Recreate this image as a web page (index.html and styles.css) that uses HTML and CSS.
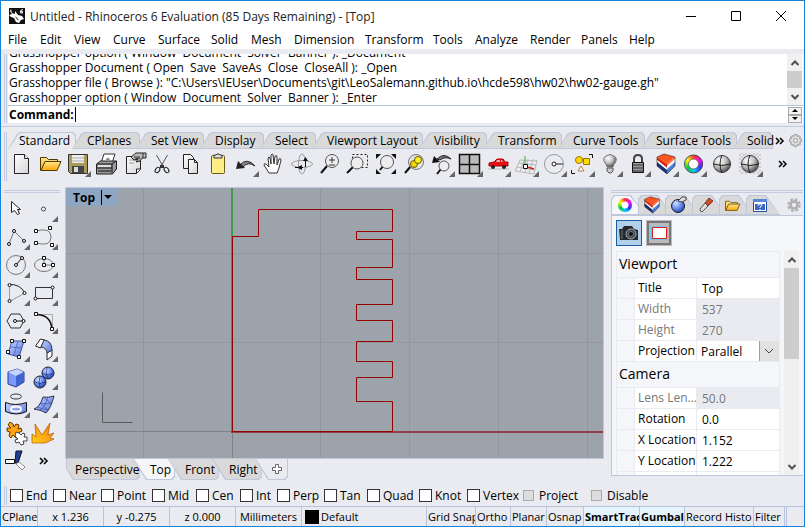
FILE: index.html
```html
<!DOCTYPE html>
<html lang="en">
<head>
<meta charset="utf-8">
<title>Untitled - Rhinoceros 6 Evaluation (85 Days Remaining) - [Top]</title>
<link rel="stylesheet" href="styles.css">
</head>
<body>
<svg class="defs" width="0" height="0" aria-hidden="true">
  <defs>
    <linearGradient id="paper" x1="0" y1="0" x2="1" y2="1"><stop offset="0" stop-color="#fff"/><stop offset="1" stop-color="#d4d4d4"/></linearGradient>
    <linearGradient id="gold" x1="0" y1="0" x2="0" y2="1"><stop offset="0" stop-color="#ffe68a"/><stop offset="1" stop-color="#ffa80c"/></linearGradient>
    <linearGradient id="blue" x1="0" y1="0" x2="1" y2="1"><stop offset="0" stop-color="#c4d2ff"/><stop offset="1" stop-color="#5a78e2"/></linearGradient>
    <linearGradient id="fire" x1="0" y1="1" x2="1" y2="0"><stop offset="0" stop-color="#ffd21c"/><stop offset="1" stop-color="#f5740a"/></linearGradient>
    <radialGradient id="ball" cx=".35" cy=".3" r=".75"><stop offset="0" stop-color="#fff"/><stop offset=".5" stop-color="#c4c4c4"/><stop offset="1" stop-color="#444"/></radialGradient>
    <radialGradient id="blueball" cx=".35" cy=".3" r=".75"><stop offset="0" stop-color="#d5e2ff"/><stop offset=".5" stop-color="#6f90f0"/><stop offset="1" stop-color="#2443a8"/></radialGradient>
    <pattern id="dots" width="4" height="4" patternUnits="userSpaceOnUse"><path d="M0 0h2v2H0zM2 2h2v2H2z" fill="#ccc"/></pattern>
    <symbol id="more" viewBox="0 0 28 28"><path d="M28 21v6h-6z" fill="#666"/></symbol>
    <symbol id="layers" viewBox="0 0 28 28"><path d="M6 7l10 7v4L6 10z" fill="#d42a14"/><path d="M6 10l10 8v2L6 12z" fill="#fff"/><path d="M6 12l10 8v4L6 16z" fill="#182f7c"/><path d="M16 14l8-7v2l-8 7z" fill="#ff7a4c"/><path d="M16 16l8-7v3l-8 7z" fill="#fff"/><path d="M16 19l8-7v4l-8 8z" fill="#4680dc"/><path d="M6 7l7-3 11 3-8 7z" fill="#ff5420"/><path d="M6 7l7-3 11 3v9l-8 8-10-8z" fill="none" stroke="#3b2020" stroke-width=".6"/></symbol>
    <symbol id="folder" viewBox="0 0 28 28"><path d="M5.500 20.500v-13h6l2 2h9v3" fill="url(#gold)" stroke="#4c3a00"/><path d="M6 20.500l4-9h16l-4 9z" fill="url(#gold)" stroke="#4c3a00"/></symbol>
    <symbol id="gear" viewBox="0 0 16 16"><circle cx="8" cy="8" r="6.500" fill="none" stroke="currentColor" stroke-width="2.500" stroke-dasharray="3.100 2"/><circle cx="8" cy="8" r="4" fill="none" stroke="currentColor" stroke-width="3"/></symbol>
    <symbol id="sphere" viewBox="0 0 28 28"><circle cx="15" cy="14" r="8.500" fill="url(#ball)" stroke="#444"/><path d="M6 14q9 3 18 0M15 5q-4 9 0 18" fill="none" stroke="#222"/></symbol>
  </defs>
</svg>

<div class="window">
  <header class="titlebar">
    <svg class="logo" width="16" height="16" viewBox="0 0 16 16"><path fill="#111" d="M0 0h16v16H0z"/><path fill="#fff" d="M2 1l1 4 3 1V3l3 4 4 1 2 3-3 1-2 3-3-1-2-4-3-1-2-2 3-1-2-3z"/><path d="M6 8l3 2 1 3-3-2z" fill="#888"/><path d="M14 1.500q-3 0-2.500 3.500h2V3.500h-2" fill="none" stroke="#fff"/></svg>
    <h1>Untitled - Rhinoceros 6 Evaluation (85 Days Remaining) - [Top]</h1>
    <div class="window-buttons">
      <button aria-label="Minimize"><svg width="12" height="12"><path d="M1 6.500h10"/></svg></button>
      <button aria-label="Maximize"><svg width="12" height="12"><path d="M1.500 1.500h9v9h-9z"/></svg></button>
      <button aria-label="Close"><svg width="12" height="12"><path d="M1 1l10 10M11 1L1 11"/></svg></button>
    </div>
  </header>

  <nav class="menubar">
    <button>File</button><button>Edit</button><button>View</button><button>Curve</button><button>Surface</button><button>Solid</button><button>Mesh</button><button>Dimension</button><button>Transform</button><button>Tools</button><button>Analyze</button><button>Render</button><button>Panels</button><button>Help</button>
  </nav>

  <section class="command">
    <div class="grip"></div>
    <div class="command-body">
      <div class="history">
        <div class="history-text">
          <p>Grasshopper option ( Window&nbsp; Document&nbsp; Solver&nbsp; Banner ): _Document</p>
          <p>Grasshopper Document ( Open&nbsp; Save&nbsp; SaveAs&nbsp; Close&nbsp; CloseAll ): _Open</p>
          <p>Grasshopper file ( Browse ): "C:\Users\IEUser\Documents\git\LeoSalemann.github.io\hcde598\hw02\hw02-gauge.gh"</p>
          <p>Grasshopper option ( Window&nbsp; Document&nbsp; Solver&nbsp; Banner ): _Enter</p>
        </div>
        <div class="scrollbar">
          <button aria-label="Scroll up"><svg width="10" height="8"><path d="M1.500 6L5 2.500 8.500 6"/></svg></button>
          <div class="thumb"></div>
          <button aria-label="Scroll down"><svg width="10" height="8"><path d="M1.500 2L5 5.500 8.500 2"/></svg></button>
        </div>
      </div>
      <div class="prompt">
        <label for="cmd">Command:</label><span class="caret"></span>
        <input id="cmd" type="text">
        <div class="spin">
          <button aria-label="Previous"><svg width="6" height="3"><path d="M0 3l3-3 3 3z"/></svg></button>
          <button aria-label="Next"><svg width="6" height="3"><path d="M0 0l3 3 3-3z"/></svg></button>
        </div>
      </div>
    </div>
  </section>

  <section class="toolbar">
    <div class="grip"></div>
    <div class="toolbar-body">
      <div class="tabs">
        <button class="tab active"><span>Standard</span></button><button class="tab"><span>CPlanes</span></button><button class="tab"><span>Set View</span></button><button class="tab"><span>Display</span></button><button class="tab"><span>Select</span></button><button class="tab"><span>Viewport Layout</span></button><button class="tab"><span>Visibility</span></button><button class="tab"><span>Transform</span></button><button class="tab"><span>Curve Tools</span></button><button class="tab"><span>Surface Tools</span></button><button class="tab last"><span>Solid</span></button>
        <button class="chev" aria-label="More tabs"><svg width="10" height="8"><path d="M1 1l3 3-3 3M5 1l3 3-3 3"/></svg></button>
        <button class="cog" aria-label="Toolbar options"><svg width="15" height="15" viewBox="0 0 16 16"><path d="M8 1.500l1.500.5.500 1.500 2-.5 1 1-.5 2 1.500.5.500 1.500-.5 1.500-1.500.5.500 2-1 1-2-.5-.5 1.500-1.500.5-1.500-.5-.5-1.500-2 .5-1-1 .5-2L2 9.500 1.500 8 2 6.500 3.500 6 3 4l1-1 2 .5L6.500 2z" fill="#ddd" stroke="#888"/><circle cx="8" cy="8" r="2" fill="#fff" stroke="#888"/></svg></button>
      </div>
      <div class="tools">
        <button aria-label="New"><svg viewBox="0 0 28 28"><path d="M7.500 4.500h10l4 4v15h-14z" fill="url(#paper)" stroke="#222"/><path d="M17.500 4.500v4h4" fill="#fff" stroke="#222"/></svg></button>
        <button aria-label="Open"><svg viewBox="0 0 28 28"><use href="#folder"/></svg></button>
        <button aria-label="Save"><svg viewBox="0 0 28 28"><path d="M5.500 4.500h19v19h-17l-2-2z" fill="#a89c5c" stroke="#333"/><path d="M9 5h12v8H9z" fill="#eee"/><path d="M9 8h12M9 11h12" stroke="#aaa"/><path d="M9 16h12v7H9z" fill="#444"/><path d="M11 17h4v5h-4z" fill="#ddd"/><use href="#more"/></svg></button>
        <button aria-label="Print"><svg viewBox="0 0 28 28"><path d="M10 13l3-9h11l-3 9z" fill="#fff" stroke="#333"/><path d="M15 9q3-3 4 1h-4z" fill="#888"/><path d="M5.500 14l4-3h16v8l-4 5h-16z" fill="#999" stroke="#222"/><path d="M6 14h15v9M21 14l4-3M6 18h15M7 21h13" stroke="#111" fill="none"/><path d="M7 15h13v2H7z" fill="#ddd"/></svg></button>
        <button aria-label="Properties"><svg viewBox="0 0 28 28"><path d="M7.500 6.500h14v13l-4 4h-10z" fill="url(#paper)" stroke="#222"/><path d="M21.500 19h-4v4" fill="#fff" stroke="#222"/><path d="M10 10h7M10 13h5" stroke="#999"/><path d="M12 7l5-4 6 0h4v5h-4l-2 3-4 1 2-3-4 1z" fill="#bbb" stroke="#222"/><path d="M15 7h6M16 9l5-1M24 3v5" stroke="#333"/></svg></button>
        <button aria-label="Cut"><svg viewBox="0 0 28 28"><path d="M9.500 5l7.500 13M20.500 5L13 18" stroke="#555"/><ellipse cx="10.500" cy="20" rx="2" ry="3" transform="rotate(35 10.500 20)" fill="none" stroke="#222"/><ellipse cx="19.500" cy="20" rx="2" ry="3" transform="rotate(-35 19.500 20)" fill="none" stroke="#222"/><path d="M13 15h4v3h-4z" fill="#333"/></svg></button>
        <button aria-label="Copy"><svg viewBox="0 0 28 28"><path d="M8.500 4.500h7l3 3v11h-10z" fill="url(#paper)" stroke="#222"/><path d="M13.500 9.500h6l3 3v11h-9z" fill="url(#paper)" stroke="#222"/><path d="M19.500 9.500v3h3" fill="none" stroke="#222"/></svg></button>
        <button aria-label="Paste"><svg viewBox="0 0 28 28"><rect x="8.500" y="5.500" width="13" height="18" rx="1" fill="#ffed87" stroke="#6d5a14"/><path d="M11 8V5h2l1-1h2l1 1h2v3z" fill="#ddd" stroke="#333"/></svg></button>
        <button aria-label="Undo"><svg viewBox="0 0 28 28"><path d="M9 15q7-8 15 1-7-5-12 1z" fill="#888" stroke="#222"/><path d="M5 19l2-8 7 7z" fill="#222"/><use href="#more"/></svg></button>
        <button aria-label="Pan"><svg viewBox="0 0 28 28"><path d="M10 23l-5-8q0-2 2-1l3 3-1-9q1-2 2 0l1 6 0-9q2-2 2 0l1 9 1-8q2-1 2 1v8l2-6q2-1 2 1l-2 8-2 5z" fill="#fff" stroke="#333"/></svg></button>
        <button aria-label="Rotate view"><svg viewBox="0 0 28 28"><ellipse cx="15" cy="14" rx="10.500" ry="3.500" fill="none" stroke="#999"/><ellipse cx="15" cy="14" rx="3.500" ry="10" fill="none" stroke="#999"/><path d="M18.500 17V8M8 17.500h8" fill="none" stroke="#111"/><path d="M16 11l2.500-4 2.500 4zM15 15v5l-5-2.500z" fill="#111"/></svg></button>
        <button aria-label="Zoom dynamic"><svg viewBox="0 0 28 28"><path d="M6 23l6-7" stroke="#111" stroke-width="2"/><circle cx="17" cy="11" r="6.500" fill="#eee" stroke="#555"/><path d="M14 10h6M17 7v6M14 15h6" stroke="#333"/></svg></button>
        <button aria-label="Zoom window"><svg viewBox="0 0 28 28"><path d="M9.500 4.500h15v13h-15z" fill="none" stroke="#222" stroke-dasharray="2 2"/><path d="M4 23l6-6" stroke="#111" stroke-width="2"/><circle cx="14" cy="13" r="6" fill="#eee" stroke="#555"/></svg></button>
        <button aria-label="Zoom extents"><svg viewBox="0 0 28 28"><path d="M5 4h5L5 9zM25 4v5l-5-5zM5 24v-5l5 5zM25 24h-5l5-5z" fill="#111"/><path d="M9 20l4-5" stroke="#111" stroke-width="2"/><circle cx="16" cy="12" r="6.500" fill="#eee" stroke="#555"/></svg></button>
        <button aria-label="Zoom selected"><svg viewBox="0 0 28 28"><path d="M6 23l6-7" stroke="#111" stroke-width="2"/><circle cx="17" cy="12" r="7.500" fill="#e4e4e4" stroke="#777"/><circle cx="15" cy="14" r="3.500" fill="#f5d800" stroke="#665800"/><circle cx="19" cy="10" r="3.500" fill="#ffee20" stroke="#665800"/></svg></button>
        <button aria-label="Undo view"><svg viewBox="0 0 28 28"><path d="M10 9q7-7 14 0-6-3-11 1z" fill="#777" stroke="#222"/><path d="M5 13l2-7 6 6z" fill="#111"/><path d="M10 24l4-5" stroke="#111" stroke-width="2"/><circle cx="17" cy="16" r="5" fill="#eee" stroke="#555"/><use href="#more"/></svg></button>
        <button aria-label="Four views"><svg viewBox="0 0 28 28"><path d="M4.500 4.500h20v19h-20z" fill="#bbb" stroke="#111" stroke-width="1.500"/><path d="M14.500 4v20M4 14.500h21" stroke="#111" stroke-width="1.500"/><use href="#more"/></svg></button>
        <button aria-label="Set view"><svg viewBox="0 0 28 28"><path d="M6 13l5-1 3-3h6l2 3h3v4H6z" fill="#e60f13" stroke="#b00"/><path d="M14 10h3v2h-4zM18 10h1l1 2h-2z" fill="#bbb"/><path d="M5 19h21" stroke="#bbb"/><circle cx="10" cy="17" r="2" fill="#222"/><circle cx="21" cy="17" r="2" fill="#222"/><use href="#more"/></svg></button>
        <button aria-label="Set CPlane"><svg viewBox="0 0 28 28"><path d="M9 10l-5 11M13 10l-4 12M17 9l-3 14M22 9l-4 15M26 10l-3 14M9 10l17 1M8 13l17 2M6 17l18 3M4 21l19 3" fill="none" stroke="#b8b8b8"/><path d="M14 16V6" stroke="#3a3"/><path d="M16 17l7 2" stroke="#c22" stroke-width="1.500"/><path d="M12.500 14.500h4v4h-4z" fill="#fff" stroke="#111"/><use href="#more"/></svg></button>
        <button aria-label="Object snap"><svg viewBox="0 0 28 28"><circle cx="15" cy="14" r="9.500" fill="none" stroke="#999"/><path d="M16 14h8" stroke="#222"/><circle cx="15" cy="14" r="2" fill="#fff" stroke="#222"/><use href="#more"/></svg></button>
        <button aria-label="Select"><svg viewBox="0 0 28 28"><path d="M22 4.500h3.500V8M4.500 20v3.500H8" fill="none" stroke="#111"/><circle cx="12" cy="10" r="3.500" fill="#ffdc00" stroke="#a66c00"/><path d="M16.500 8.500h6v6h-6z" fill="#ffdc00" stroke="#a66c00"/><path d="M14 16l3 5h-6z" fill="#fff" stroke="#b37b48"/><use href="#more"/></svg></button>
        <button aria-label="Hide"><svg viewBox="0 0 28 28"><path d="M12 17q0-2-2-4-3-5 1-7 4-3 8 0 4 2 1 7-2 2-2 4z" fill="url(#ball)" stroke="#777"/><path d="M12 18h6v3l-2 2h-2l-2-2z" fill="#ccc" stroke="#555"/><use href="#more"/></svg></button>
        <button aria-label="Lock"><svg viewBox="0 0 28 28"><path d="M11 13V9q0-4 4-4t4 4v4" fill="none" stroke="#444" stroke-width="2"/><path d="M9.500 12.500h11v10h-11z" fill="#999" stroke="#111"/><path d="M10 15h10M10 18h10M10 21h10" stroke="#333"/><use href="#more"/></svg></button>
        <button aria-label="Layers"><svg viewBox="0 0 28 28"><use href="#layers"/><use href="#more"/></svg></button>
        <button aria-label="Properties colour"><span class="wheel"></span><svg viewBox="0 0 28 28"><circle cx="14.500" cy="14" r="9" fill="none" stroke="#444"/><circle cx="14.500" cy="14" r="5" fill="#fff" stroke="#777"/><use href="#more"/></svg></button>
        <button aria-label="Shade"><svg viewBox="0 0 28 28"><use href="#sphere"/></svg></button>
        <button aria-label="Render"><svg viewBox="0 0 28 28"><path d="M4 3h22v21H4z" fill="url(#dots)"/><use href="#sphere"/><use href="#more"/></svg></button>
        <button class="chev" aria-label="More tools"><svg class="small" width="10" height="8"><path d="M1 1l3 3-3 3M5 1l3 3-3 3"/></svg></button>
      </div>
    </div>
  </section>

  <main class="main">
    <aside class="sidebar">
      <div class="hgrip"></div>
      <div class="side-tools">
        <button aria-label="Cancel"><svg viewBox="0 0 28 28"><path d="M9.500 6.500v11l3-2 3 4 2-1-2-4h3z" fill="#fff" stroke="#222"/></svg></button>
        <button aria-label="Point"><svg viewBox="0 0 28 28"><circle cx="13.500" cy="14" r="2" fill="#fff" stroke="#444"/><use href="#more"/></svg></button>
        <button aria-label="Polyline"><svg viewBox="0 0 28 28"><path d="M7 21l5-13 10 10" fill="none" stroke="#777"/><g fill="#fff" stroke="#111"><circle cx="7" cy="21" r="1.500"/><circle cx="12" cy="8" r="1.500"/><circle cx="22" cy="18" r="1.500"/></g><use href="#more"/></svg></button>
        <button aria-label="Curve"><svg viewBox="0 0 28 28"><path d="M6 8q15-4 15 6T6 20" fill="none" stroke="#777"/><path d="M4.500 6.500h3v3h-3zM18.500 3.500h3v3h-3zM4.500 18.500h3v3h-3zM20.500 20.500h3v3h-3z" fill="#fff" stroke="#111"/><use href="#more"/></svg></button>
        <button aria-label="Circle"><svg viewBox="0 0 28 28"><circle cx="14" cy="14" r="9.500" fill="none" stroke="#777"/><path d="M14 14l6-7" stroke="#111"/><g fill="#fff" stroke="#111"><circle cx="14" cy="14" r="1.500"/><circle cx="20" cy="7" r="1.500"/></g><use href="#more"/></svg></button>
        <button aria-label="Ellipse"><svg viewBox="0 0 28 28"><ellipse cx="14" cy="14" rx="9.500" ry="6.500" fill="none" stroke="#777"/><path d="M14 7v7h9" stroke="#777" fill="none"/><path d="M12.500 5.500h3v3h-3zM12.500 12.500h3v3h-3zM21.500 12.500h3v3h-3z" fill="#fff" stroke="#111"/><use href="#more"/></svg></button>
        <button aria-label="Arc"><svg viewBox="0 0 28 28"><path d="M7.500 5.500v17L23 14" fill="none" stroke="#999"/><path d="M7.500 5.500Q18 5 23 14" fill="none" stroke="#222"/><g fill="#fff" stroke="#111"><circle cx="7.500" cy="6" r="1.500"/><circle cx="7.500" cy="22" r="1.500"/><circle cx="22.500" cy="14" r="1.500"/></g><use href="#more"/></svg></button>
        <button aria-label="Rectangle"><svg viewBox="0 0 28 28"><path d="M5.500 8.500h17v11h-17z" fill="none" stroke="#333"/><g fill="#fff" stroke="#111"><circle cx="22.500" cy="8.500" r="1.500"/><circle cx="5.500" cy="19.500" r="1.500"/></g><use href="#more"/></svg></button>
        <button aria-label="Polygon"><svg viewBox="0 0 28 28"><path d="M5 14l4-7h9l4 7-4 7H9z" fill="none" stroke="#333"/><path d="M13 14h8" stroke="#111"/><g fill="#fff" stroke="#111"><circle cx="13" cy="14" r="1.500"/><circle cx="21.500" cy="14" r="1.500"/></g><use href="#more"/></svg></button>
        <button aria-label="Fillet"><svg viewBox="0 0 28 28"><path d="M6 7.500h16.500V22" fill="none" stroke="#aaa"/><path d="M6 7.500q15 0 16 15" fill="none" stroke="#111" stroke-width="1.500"/><path d="M4.500 5.500h3v3h-3zM20.500 20.500h3v3h-3z" fill="#fff" stroke="#111"/><use href="#more"/></svg></button>
        <button aria-label="Surface from points"><svg viewBox="0 0 28 28"><path d="M10 6l12 0-5 16-11-3z" fill="url(#blue)" stroke="#3b509e"/><path d="M16 6l-4 14M8 12l12 1" stroke="#5670c4"/><path d="M8.500 4.500h3v3h-3zM20.500 4.500h3v3h-3zM4.500 15.500h3v3h-3zM15.500 20.500h3v3h-3z" fill="#fff" stroke="#111"/><use href="#more"/></svg></button>
        <button aria-label="Surface"><svg viewBox="0 0 28 28"><path d="M5.500 11l5-7 4 1-4 8zM17 18l5-3v6l-5 4z" fill="#fff" stroke="#222"/><path d="M14 5q8 1 8 10l-5 3q0-5-6-6z" fill="url(#blue)" stroke="#333"/><use href="#more"/></svg></button>
        <button aria-label="Box"><svg viewBox="0 0 28 28"><path d="M6 9l9-3 7 3v10l-8 5-8-3z" fill="#7c99f7" stroke="#223a91"/><path d="M6 9l9-3 7 3-8 4z" fill="#c8d6ff"/><path d="M14 13l8-4v10l-8 5z" fill="#4163cf"/></svg></button>
        <button aria-label="Boolean"><svg viewBox="0 0 28 28"><circle cx="10" cy="19" r="6" fill="url(#blueball)" stroke="#223"/><circle cx="18" cy="10" r="6" fill="url(#blueball)" stroke="#223"/><path d="M12 10q6 4 12 0M17 4q-2 6 1 12M5 19q5 3 10 0M10 14q-2 5 0 10" fill="none" stroke="#18307c" stroke-width=".7"/><use href="#more"/></svg></button>
        <button aria-label="Project"><svg viewBox="0 0 28 28"><ellipse cx="14" cy="5.500" rx="5.500" ry="2.500" fill="none" stroke="#333"/><path d="M3.500 11.500q10 4 21 0v9q-10 5-21 0z" fill="url(#blue)" stroke="#111"/><ellipse cx="14" cy="18" rx="5" ry="2.500" fill="none" stroke="#fff" stroke-width="2"/><use href="#more"/></svg></button>
        <button aria-label="Mesh"><svg viewBox="0 0 28 28"><path d="M4 18q6-2 9-12 5 1 11-1-3 12-8 17-4-3-12-4z" fill="url(#blue)" stroke="#334"/><path d="M10 12q5 2 11 0M7 16q6 2 11 3M18 6q-3 10-8 13M13 6l8 6M10 12l8 7" fill="none" stroke="#3b53a8" stroke-width=".7"/><use href="#more"/></svg></button>
        <button aria-label="Explode"><svg viewBox="0 0 28 28"><path d="M8 3l3 2 1 3 2-3 3 1-1 4 3-1 1 3-4 2 1 4-3 1-3-3-2 3-2-2 1-4-3-1 0-3 4 0-3-3z" fill="#ffa313" stroke="#5d3800"/><path d="M14 13l3 1 2 2 2-2 2 1-1 3 3 0v4l-4 0 1 3-3 1-2-3-3 1-1-3 3-1-3-3z" fill="#fff" stroke="#444"/></svg></button>
        <button aria-label="Join"><svg viewBox="0 0 28 28"><path d="M2 24V15l4 3L5 5l7 11 8-12-2 12 6-2-4 5 4 1-9 4z" fill="url(#fire)" stroke="#b35600" stroke-width=".7"/></svg></button>
        <button aria-label="Trim"><svg viewBox="0 0 28 28"><path d="M14 4h6l-4 12h-3z" fill="#203e94" stroke="#112"/><path d="M3.500 12.500h9v4h-9z" fill="#fff" stroke="#111"/><path d="M14 17l3-2 6 5-3 3z" fill="#fff" stroke="#888"/></svg></button>
        <button class="chev" aria-label="More tools"><svg class="small" width="10" height="8"><path d="M1 1l3 3-3 3M5 1l3 3-3 3"/></svg></button>
      </div>
    </aside>

    <section class="view">
      <div class="viewport">
        <svg class="canvas" width="100%" height="100%">
          <g transform="translate(.5 .5)" fill="none">
            <path d="M77 0v271M254 0v271M343 0v271M432 0v271M521 0v271M0 65h2000M0 154h2000" stroke="#92979d"/>
            <path d="M0 243h166M166 243v40" stroke="#7e8287"/>
            <path d="M36 204v30h30" stroke="#5a5a5a"/>
          </g>
          <path d="M166 0v244" stroke="#409b46" stroke-width="2"/>
          <path d="M165 244h1835" stroke="#984047" stroke-width="2"/>
          <path transform="translate(.5 .5)" d="M166 48h26V21h134v22h-36v8h36v28h-36v12h36v25h-36v16h36v21h-36v20h36v16h-36v24h36v30H166z" fill="none" stroke="#970000"/>
        </svg>
        <button class="view-title"><b>Top</b><svg width="8" height="5"><path d="M0 0h8L4 4z"/></svg></button>
      </div>
      <div class="view-tabs">
        <button><span>Perspective</span></button><button class="active"><span>Top</span></button><button><span>Front</span></button><button><span>Right</span></button><button class="add" aria-label="New viewport"><span><svg width="10" height="10"><path d="M3.500.5h3v3h3v3h-3v3h-3v-3h-3v-3h3z" fill="#fff" stroke="#666"/></svg></span></button>
      </div>
    </section>

    <aside class="panel">
      <div class="hgrip"></div>
      <div class="panel-tabs">
        <button class="active" aria-label="Properties"><span class="wheel"></span></button>
        <button aria-label="Layers"><svg width="18" height="18" viewBox="4 3 22 22"><use href="#layers" width="28" height="28"/></svg></button>
        <button aria-label="Rendering"><svg width="18" height="18" viewBox="0 0 18 18"><circle cx="8" cy="10" r="6.500" fill="url(#blueball)" stroke="#123"/><path d="M8 5l4-4h4v3l-4 2z" fill="#ddd" stroke="#444"/></svg></button>
        <button aria-label="Materials"><svg width="18" height="18" viewBox="0 0 18 18"><path d="M3 13l5-6 3 3-6 6q-2 0-2-3z" fill="#ddd" stroke="#555"/><path d="M8 7l4-5 4 3-5 5z" fill="#d64a27" stroke="#643"/></svg></button>
        <button aria-label="Libraries"><svg width="19" height="19" viewBox="2 0 27 27"><use href="#folder" width="28" height="28"/></svg></button>
        <button aria-label="Help"><svg width="16" height="16" viewBox="0 0 16 16"><path d="M1.500 2.500h13v12h-13z" fill="#fff" stroke="#224a9e"/><path d="M1 2h14v3H1z" fill="#5a85d8"/><path d="M3 7h10v6H3z" fill="#3c66c4"/><path d="M6 9q0-2 2-2t2 1-2 2v1M8 12v1" fill="none" stroke="#fff"/></svg></button>
        <button class="cog" aria-label="Panel options"><svg width="14" height="14"><use href="#gear"/></svg></button>
      </div>
      <div class="panel-body">
        <div class="modes">
          <button class="on" aria-label="Camera"><svg width="20" height="16" viewBox="0 0 20 16"><path d="M0 4h3l2-3h8l2 3 4 1v10H1z" fill="#24292d"/><circle cx="12" cy="9" r="5" fill="#454b50" stroke="#a2abb0"/><circle cx="12" cy="9" r="2.500" fill="#111" stroke="#71787c"/><path d="M3 5v9" stroke="#777"/></svg></button>
          <button class="frame" aria-label="Frame"><svg width="24" height="24"><path d="M0 0h24v24H0z" fill="#777"/><path d="M2 2h20v20H2z" fill="#bbb"/><path d="M3 5h18v14H3z" fill="#6ec6ee"/><path d="M5.500 6.500h14v11h-14z" fill="#fff" stroke="#e01b1b"/></svg></button>
        </div>
        <div class="props-wrap">
          <form class="props">
            <h2>Viewport</h2>
            <div class="row"><label for="p1">Title</label><input id="p1" value="Top"></div>
            <div class="row"><label for="p2" class="off">Width</label><input id="p2" value="537" disabled></div>
            <div class="row"><label for="p3" class="off">Height</label><input id="p3" value="270" disabled></div>
            <div class="row"><label for="p4">Projection</label><div class="select"><select id="p4"><option>Parallel</option><option>Perspective</option></select><svg width="10" height="8"><path d="M1 2l4 4 4-4"/></svg></div></div>
            <h2>Camera</h2>
            <div class="row"><label for="p5" class="off">Lens Len...</label><input id="p5" value="50.0" disabled></div>
            <div class="row"><label for="p6">Rotation</label><input id="p6" value="0.0"></div>
            <div class="row"><label for="p7">X Location</label><input id="p7" value="1.152"></div>
            <div class="row"><label for="p8">Y Location</label><input id="p8" value="1.222"></div>
            <div class="row"><label></label><span class="blank"></span></div>
          </form>
          <div class="scrollbar">
            <button aria-label="Scroll up"><svg width="10" height="8"><path d="M1.500 6L5 2.500 8.500 6"/></svg></button>
            <div class="thumb"></div>
            <div class="track"></div>
            <button aria-label="Scroll down"><svg width="10" height="8"><path d="M1.500 2L5 5.500 8.500 2"/></svg></button>
          </div>
        </div>
      </div>
    </aside>
  </main>

  <section class="osnap">
    <div class="grip"></div>
    <div class="snaps">
      <label><input type="checkbox">End</label><label><input type="checkbox">Near</label><label><input type="checkbox">Point</label><label><input type="checkbox">Mid</label><label><input type="checkbox">Cen</label><label><input type="checkbox">Int</label><label><input type="checkbox">Perp</label><label><input type="checkbox">Tan</label><label><input type="checkbox">Quad</label><label><input type="checkbox">Knot</label><label><input type="checkbox">Vertex</label><label class="dim"><input type="checkbox" disabled>Project</label><label class="dim"><input type="checkbox" disabled>Disable</label>
    </div>
  </section>

  <footer class="status">
    <button>CPlane</button><button>x 1.236</button><button>y -0.275</button><button>z 0.000</button><button>Millimeters</button><button class="layer"><span class="swatch"></span>Default</button><button>Grid Snap</button><button>Ortho</button><button>Planar</button><button>Osnap</button><button class="lit">SmartTrac</button><button class="lit">Gumbal</button><button>Record Histo</button><button>Filter</button><span class="end"></span>
  </footer>
</div>
</body>
</html>
```

FILE: styles.css
```css
* { box-sizing: border-box; }
body { margin: 0; font: 12px/15px "Open Sans", "Noto Sans", sans-serif; color: #000; }
button, input, select { font: inherit; color: inherit; border: 0; padding: 0; margin: 0; background: none; border-radius: 0; }
h1, h2, p { margin: 0; font-weight: 400; }
.defs { position: absolute; }

.window { display: flex; flex-direction: column; height: 100vh; border: 1px solid #1883d7; background: #e9ebf0; overflow: hidden; }

.titlebar { display: flex; align-items: center; flex: none; height: 30px; padding: 0 1px 0 8px; gap: 5px; background: #fff; }
.titlebar h1 { flex: 1; font-size: 12px; color: #222; white-space: nowrap; }
.window-buttons { display: flex; }
.window-buttons button { display: grid; place-items: center; width: 45px; height: 30px; }
.window-buttons path { fill: none; stroke: #000; }

.menubar { display: grid; grid-template-columns: 32px 34px 39px 45px 53px 40px 43px 71px 68px 42px 55px 51px 48px 1fr; flex: none; height: 18px; padding-left: 7px; background: #fff; }
.menubar button { text-align: left; white-space: nowrap; line-height: 18px; }

.grip { flex: none; width: 3px; border: solid #c3cbe0; border-width: 0 1px; }
.hgrip { height: 3px; border: solid #c3cbe0; border-width: 1px 0; }

.command { display: flex; flex: none; height: 78px; padding: 5px 1px 3px 3px; gap: 1px; border-bottom: 1px solid #c3cbe0; }
.command-body { flex: 1; min-width: 0; display: flex; flex-direction: column; background: #fff; }
.history { display: flex; height: 51px; }
.history-text { flex: 1; display: flex; flex-direction: column; justify-content: flex-end; overflow: hidden; padding-left: 1px; }
.history-text p { flex: none; white-space: nowrap; }
.scrollbar { display: flex; flex-direction: column; flex: none; width: 15px; background: #f0f0f0; }
.scrollbar button { display: grid; place-items: center; flex: none; height: 17px; }
.scrollbar path { fill: none; stroke: #505050; stroke-width: 2; }
.thumb { background: #cdcdcd; flex: 1; }
.history .scrollbar, .prompt .spin { margin-right: 1px; }
.prompt { display: flex; align-items: center; flex: 1; border-top: 1px solid #b8c6d8; padding-left: 1px; }
.prompt label { font-weight: 700; }
.caret { width: 1px; height: 15px; margin-left: 1px; background: #000; }
.prompt input { flex: 1; outline: 0; }
.spin { display: flex; flex-direction: column; width: 14px; }
.spin button { display: grid; place-items: center; height: 8px; border: 1px solid #aaa; background: #f3f3f3; }

.toolbar { display: flex; flex: none; height: 60px; padding: 5px 1px 6px 3px; gap: 1px; }
.toolbar-body { flex: 1; min-width: 0; }
.tabs { display: grid; grid-template-columns: 68px 64px 64px 60px 52px 107px 64px 75px 83px 92px 36px 1fr 16px; height: 17px; }
.tab { position: relative; text-align: left; padding-left: 11px; white-space: nowrap; }
.tab::before, .tab::after { content: ""; position: absolute; inset: 0 0 0 -4px; background: #c0c7da; clip-path: polygon(0 100%, 9px 2px, 12px 0, calc(100% - 3px) 0, 100% 3px, 100% 100%); }
.tab::after { inset: 1px 1px 1px -3px; background: #d9d9d9; }
.tab.active::before, .tab.active::after { inset: 0; }
.tab.active::after { inset: 1px 1px 0 1px; background: #e9ebf0; }
.tab span { position: relative; z-index: 1; }
.tab.last { padding-left: 10px; }
.chev, .cog { display: grid; place-items: center; }
.chev path { fill: none; stroke: #000; stroke-width: 1.500; }
.tools { display: grid; grid-template-columns: repeat(27, 28px) 1fr; padding-top: 1px; margin-left: -1px; }
.tools button, .side-tools button { position: relative; height: 28px; display: grid; place-items: center; }
.tools svg, .side-tools svg { width: 28px; height: 28px; position: relative; }
.tools .small, .side-tools .small { width: 10px; height: 8px; }
.wheel { width: 18px; height: 18px; border-radius: 50%; background: conic-gradient(#f33, #f0f, #33f, #0cf, #0c3, #ff0, #f33); }
.tools .wheel { position: absolute; left: 6px; top: 5px; }

.main { display: grid; grid-template-columns: 64px 1fr 200px; flex: 1; min-height: 0; }
.sidebar { padding: 3px 5px 0 3px; }
.side-tools { display: grid; grid-template-columns: 28px 28px; grid-auto-rows: 28px; margin: 2px 0 0 -2px; }

.view { display: flex; flex-direction: column; min-width: 0; border-top: 1px solid #c0c7da; }
.viewport { position: relative; flex: 1; min-height: 0; background: #9da3aa; border: solid #c0c7da; border-width: 0 1px 1px; overflow: hidden; }
.canvas { display: block; position: absolute; inset: 0; }
.view-title { position: absolute; left: 0; top: 0; display: flex; align-items: center; height: 18px; padding: 0 5px 0 7px; background: #8ea6c3; }
.view-title b { padding-right: 6px; border-right: 1px solid #000; margin-right: 2px; }
.view-tabs { display: grid; grid-template-columns: 74px 35px 44px 43px 26px 1fr; flex: none; height: 21px; padding-left: 1px; }
.view-tabs button { position: relative; text-align: left; padding-left: 10px; white-space: nowrap; }
.view-tabs button::before, .view-tabs button::after { content: ""; position: absolute; inset: 0 0 0 -7px; background: #c0c7da; clip-path: polygon(0 0, 100% 0, 100% calc(100% - 3px), calc(100% - 3px) 100%, 13px 100%); }
.view-tabs button::after { inset: 0 1px 1px -6px; background: #d9d9d9; }
.view-tabs button:first-child { padding-left: 9px; }
.view-tabs button:first-child::before { inset: 0; clip-path: polygon(0 0, 100% 0, 100% calc(100% - 3px), calc(100% - 3px) 100%, 7px 100%, 0 10px); }
.view-tabs button:first-child::after { inset: 0 1px 1px; clip-path: polygon(0 0, 100% 0, 100% calc(100% - 3px), calc(100% - 3px) 100%, 7px 100%, 0 10px); }
.view-tabs .active::after { background: #f5f6f9; }
.view-tabs .add::after { background: #e9ebf0; }
.view-tabs span { position: relative; z-index: 1; }

.panel { display: flex; flex-direction: column; min-height: 0; padding: 3px 1px 4px 7px; }
.panel-tabs { display: grid; grid-template-columns: repeat(6, 27px) 1fr; flex: none; height: 20px; margin-top: 2px; }
.panel-tabs button { position: relative; display: grid; place-items: center; }
.panel-tabs button > * { position: relative; z-index: 1; }
.panel-tabs button:not(.cog)::before, .panel-tabs button:not(.cog)::after { content: ""; position: absolute; inset: 0 -7px 0 0; background: #c0c7da; clip-path: polygon(0 4px, 3px 0, calc(100% - 14px) 0, 100% 100%, 0 100%); }
.panel-tabs button:not(.cog)::after { inset: 1px -6px 1px 1px; background: #d9d9d9; }
.panel-tabs .active::after { background: #f5f6f9 !important; }
.panel-tabs .wheel { width: 14px; height: 14px; background: radial-gradient(#fff 3px, transparent 4px), conic-gradient(#f33, #f0f, #33f, #0cf, #0c3, #ff0, #f33); }
.panel-tabs .cog { color: #b0b0b0; justify-items: end; padding-right: 2px; }
.panel-body { display: flex; flex-direction: column; flex: 1; min-height: 0; padding: 4px 4px 0; border: 1px solid #c0c7da; border-right: 0; background: #f5f6f9; }
.modes { display: flex; gap: 4px; flex: none; }
.modes button { display: grid; place-items: center; width: 26px; height: 26px; border: 1px solid #bbb; }
.modes .on { background: #b3d0ea; border-color: #1b5f9e; }
.props-wrap { display: flex; flex: 1; min-height: 0; margin-top: 5px; gap: 4px; }
.props { flex: 1; min-width: 0; overflow: hidden; border: 1px solid #e9ebf0; border-bottom: 0; }
.props h2 { font-size: 14px; line-height: 24px; height: 26px; padding-left: 2px; border-bottom: 1px solid #e9ebf0; }
.row { display: grid; grid-template-columns: 63px 1fr; height: 21px; padding-left: 17px; border-bottom: 1px solid #e9ebf0; }
.row label { padding-left: 3px; line-height: 20px; background: #fff; border: solid #e9ebf0; border-width: 0 1px; white-space: nowrap; overflow: hidden; }
.row input { width: 100%; min-width: 0; height: 20px; padding-left: 5px; background: #fff; line-height: 18px; }
.row input:disabled { background: #e9ebf0; }
.row .off, .row input:disabled { color: #777; }
.blank { background: #fff; }
.select { position: relative; }
.select select { appearance: none; width: 100%; height: 20px; padding-left: 4px; background: linear-gradient(#a0a0a0, #a0a0a0) right 19px top / 1px 20px no-repeat, linear-gradient(#e1e1e1, #e1e1e1) right / 19px 20px no-repeat, #fff; }
.select svg { position: absolute; right: 5px; top: 6px; pointer-events: none; }
.select path { fill: none; stroke: #444; }
.props-wrap .thumb { flex: 1; }
.track { flex: 0 1 44%; }

.osnap { display: flex; flex: none; height: 26px; padding: 6px 3px 1px; gap: 2px; }
.snaps { display: grid; grid-template-columns: 43px 48px 51px 44px 44px 37px 47px 43px 52px 48px 56px 68px 1fr; flex: 1; align-items: center; }
.snaps label { display: flex; align-items: center; gap: 3px; white-space: nowrap; }
.snaps input { appearance: none; flex: none; width: 13px; height: 13px; background: #fff; border: 1px solid #333; margin-left: 1px; }
.snaps input:disabled { width: 11px; height: 11px; background: #ddd; border-color: #aaa; margin-right: 2px; }

.status { display: grid; grid-template-columns: 37px 66px 66px 66px 66px 125px 49px 35px 36px 37px 56px 45px 69px 31px 1fr; flex: none; height: 20px; border-top: 1px solid #b9c2dc; font-size: 11px; }
.status button { overflow: hidden; white-space: nowrap; border-right: 1px solid #b9c2dc; text-align: center; line-height: 19px; }
.status button:first-child, .status button:nth-child(n+7) { text-align: left; padding-left: 1px; }
.status .layer { display: flex; align-items: center; gap: 2px; padding-left: 3px; }
.swatch { width: 14px; height: 14px; background: #000; }
.status .lit { font-weight: 700; background: #e5f3fd; }
.end { width: 2px; border-right: 1px solid #b9c2dc; }
```
